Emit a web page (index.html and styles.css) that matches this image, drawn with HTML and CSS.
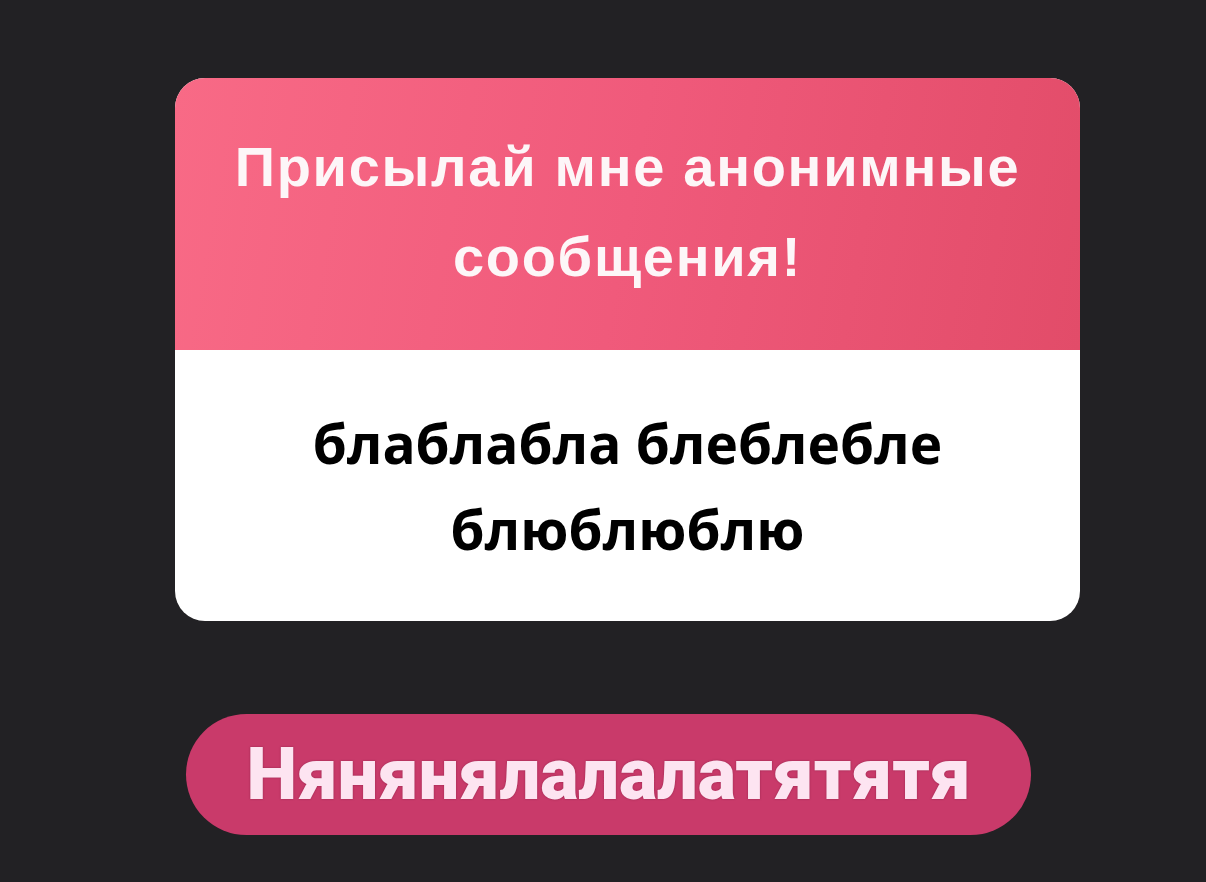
FILE: index.html
```html
<!DOCTYPE html>
<html lang="ru">
<head>
    <meta charset="UTF-8">
    <meta name="viewport" content="width=device-width, initial-scale=1.0">
    <title>Анонимные сообщения</title>
    <link rel="stylesheet" href="styles.css">
</head>
<body>

<div class="page">
    <div class="card">
        <div class="card-header">
            <h1>Присылай мне анонимные сообщения!</h1>
        </div>
        <div class="card-body">
            <p>блаблабла блеблебле блюблюблю</p>
        </div>
    </div>

    <button class="reply-btn">Нянянялалалатятятя</button>
</div>

</body>
</html>
```

FILE: styles.css
```css
body {
    margin: 0;
    height: 100vh;
    background-color: #222124;
    font-family: Roboto, "Noto Sans", sans-serif;
}

.page {
    display: flex;
    flex-direction: column;
    align-items: center;
    padding-top: 78px;
}

.card {
    width: 905px;
    border-radius: 30px;
    overflow: hidden;
    background-color: #ffffff;
    margin-left: 49px;
}

.card-header {
    height: 272px;
    display: flex;
    align-items: center;
    justify-content: center;
    background: linear-gradient(100deg, #f86a86 0%, #f05a7b 50%, #e24c69 100%);
}

.card-header h1 {
    margin: 0;
    width: 860px;
    text-align: center;
    color: #fdf6f8;
    font-family: "Liberation Sans", Arial, sans-serif;
    font-size: 56px;
    font-weight: 700;
    letter-spacing: 1.7px;
    line-height: 90px;
    padding-bottom: 4px;
}

.card-body {
    height: 271px;
    display: flex;
    align-items: center;
    justify-content: center;
}

.card-body p {
    margin: 0;
    width: 720px;
    text-align: center;
    color: #000000;
    font-family: "Open Sans", "Noto Sans", sans-serif;
    font-size: 55px;
    font-weight: 700;
    line-height: 86px;
}

.reply-btn {
    margin-top: 93px;
    width: 845px;
    height: 121px;
    border: none;
    border-radius: 61px;
    background-color: #c93a6a;
    color: #fde4f1;
    font-family: Roboto, sans-serif;
    font-size: 72px;
    font-weight: 900;
    text-shadow: 0 0 2px rgba(90, 10, 40, 0.5);
    cursor: pointer;
    margin-left: 11px;
}
```
